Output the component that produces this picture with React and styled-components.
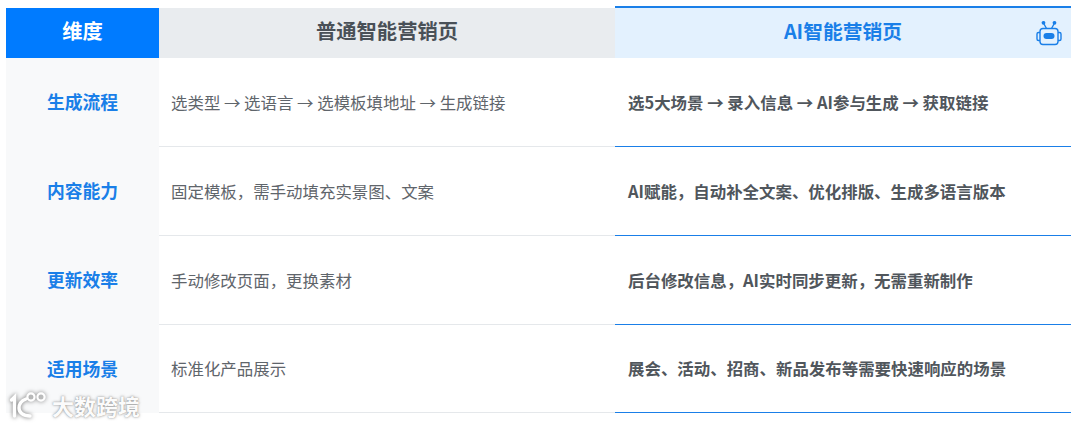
import React from "react";
import styled, { createGlobalStyle } from "styled-components";

const Global = createGlobalStyle`
  html, body { margin: 0; padding: 0; background: #fff; }
  body { font-family: "Noto Sans CJK SC", "Noto Sans", sans-serif; }
`;

const Page = styled.div`
  position: relative;
  width: 1080px;
  height: 425px;
  padding: 6px 9px 0 6px;
  box-sizing: border-box;
  overflow: hidden;
`;

const Table = styled.div`
  display: grid;
  grid-template-columns: 153px 456px 456px;
  grid-template-rows: 52px 89px 89px 89px 88px;
`;

const HeadCell = styled.div`
  display: flex;
  align-items: center;
  justify-content: center;
  position: relative;
  box-sizing: border-box;
  font-size: ${(p) => (p.$ai ? "19.8px" : "20.3px")};
  font-weight: 700;
  margin-top: ${(p) => (p.$ai ? "0" : "2px")};
  padding-bottom: ${(p) => (p.$ai ? "5px" : "6px")};
  background: ${(p) => (p.$ai ? "#e3f1fe" : p.$first ? "#007bff" : "#e9ecef")};
  color: ${(p) => (p.$ai ? "#1a7fe8" : p.$first ? "#ffffff" : "#495057")};
  border-top: ${(p) => (p.$ai ? "2px solid #1a7fe8" : "0")};
`;

const RobotSlot = styled.span`
  position: absolute;
  right: 8px;
  top: 12px;
  display: flex;
`;

const LabelCell = styled.div`
  display: flex;
  align-items: center;
  justify-content: center;
  padding-bottom: 3px;
  background: #f8f9fa;
  color: #1a7fe8;
  font-size: 17.8px;
  font-weight: 700;
`;

const BodyCell = styled.div`
  display: flex;
  align-items: center;
  box-sizing: border-box;
  padding-left: ${(p) => (p.$ai ? "13px" : "12px")};
  padding-bottom: 1px;
  font-size: 16.45px;
  color: ${(p) => (p.$ai ? "#50565c" : "#5f656b")};
  font-weight: ${(p) => (p.$ai ? 700 : 400)};
  border-bottom: 1px solid ${(p) => (p.$ai ? "#1a7fe8" : "#e5e8eb")};
`;

const Watermark = styled.div`
  position: absolute;
  left: 9px;
  top: 390px;
  display: flex;
  align-items: center;
  gap: 4px;
  color: rgba(255, 255, 255, 0.97);
  font-size: 22px;
  font-weight: 700;
  line-height: 30px;
  text-shadow: 0 0 3px rgba(120, 120, 120, 0.75), 0 0 1px rgba(120, 120, 120, 0.5);
`;

const Robot = () => (
  <svg width="28" height="28" viewBox="0 0 28 28" fill="none" stroke="#1a7fe8" strokeWidth="1.4">
    <circle cx="8.5" cy="2.8" r="1.2" fill="#1a7fe8" />
    <circle cx="19.5" cy="2.8" r="1.2" fill="#1a7fe8" />
    <path d="M9 4l2.5 4.5M19 4l-2.5 4.5" />
    <rect x="5" y="8.5" width="18" height="16" rx="3" />
    <path d="M5 12.5H3.5a1.5 1.5 0 0 0-1.5 1.5v5a1.5 1.5 0 0 0 1.5 1.5H5M23 12.5h1.5a1.5 1.5 0 0 1 1.5 1.5v5a1.5 1.5 0 0 1-1.5 1.5H23" />
    <rect x="8.5" y="13" width="11" height="6" rx="3" fill="#1a7fe8" stroke="none" />
  </svg>
);

const WaterLogo = () => (
  <svg width="39" height="26" viewBox="0 0 39 26" fill="none" stroke="#fff" strokeWidth="3.4" strokeLinecap="round" style={{ filter: "drop-shadow(0 0 2px rgba(110,110,110,1))" }}>
    <path d="M2.5 8l3-3v19" />
    <path d="M17 7C12 9 10 12 10 16c0 4.5 4 8 11 8" />
    <circle cx="22" cy="5" r="3.6" strokeWidth="2.2" />
    <circle cx="32" cy="5" r="3.6" strokeWidth="2.2" />
  </svg>
);

const rows = [
  ["生成流程", "选类型 → 选语言 → 选模板填地址 → 生成链接", "选5大场景 → 录入信息 → AI参与生成 → 获取链接"],
  ["内容能力", "固定模板，需手动填充实景图、文案", "AI赋能，自动补全文案、优化排版、生成多语言版本"],
  ["更新效率", "手动修改页面，更换素材", "后台修改信息，AI实时同步更新，无需重新制作"],
  ["适用场景", "标准化产品展示", "展会、活动、招商、新品发布等需要快速响应的场景"],
];

export default function App() {
  return (
    <Page>
      <Global />
      <Table>
        <HeadCell $first>维度</HeadCell>
        <HeadCell>普通智能营销页</HeadCell>
        <HeadCell $ai>
          AI智能营销页
          <RobotSlot><Robot /></RobotSlot>
        </HeadCell>
        {rows.map(([a, b, c]) => (
          <React.Fragment key={a}>
            <LabelCell>{a}</LabelCell>
            <BodyCell>{b}</BodyCell>
            <BodyCell $ai>{c}</BodyCell>
          </React.Fragment>
        ))}
      </Table>
      <Watermark>
        <WaterLogo />
        <span>大数跨境</span>
      </Watermark>
    </Page>
  );
}
